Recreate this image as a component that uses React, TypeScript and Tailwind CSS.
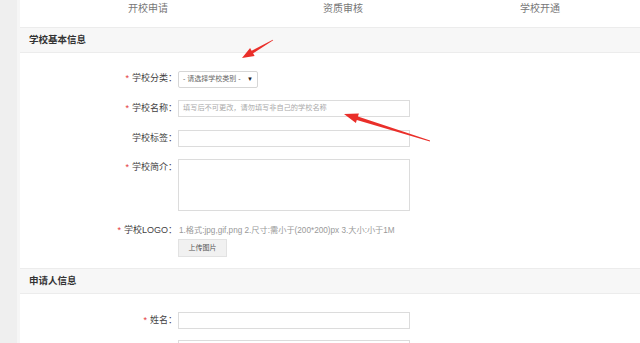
import React from 'react';

const font = { fontFamily: '"Liberation Sans", "Noto Sans CJK SC", sans-serif' };

// builds a tapered arrow polygon from tail to tip
const arrowPoints = (tx: number, ty: number, px: number, py: number, head: number, hw: number, sw: number) => {
  const dx = tx - px;
  const dy = ty - py;
  const len = Math.hypot(dx, dy);
  const ux = dx / len;
  const uy = dy / len;
  const nx = -uy;
  const ny = ux;
  const bx = px + ux * head;
  const by = py + uy * head;
  const pts = [
    [px, py],
    [bx + nx * hw, by + ny * hw],
    [bx + nx * sw * 0.5, by + ny * sw * 0.5],
    [tx + nx * 0.4, ty + ny * 0.4],
    [tx - nx * 0.4, ty - ny * 0.4],
    [bx - nx * sw * 0.5, by - ny * sw * 0.5],
    [bx - nx * hw, by - ny * hw],
  ];
  return pts.map(p => `${p[0].toFixed(1)},${p[1].toFixed(1)}`).join(' ');
};

const Label = ({ text, required }: { text: string; required?: boolean }) => (
  <div className="w-[158px] shrink-0 flex justify-end items-center pr-[1px] text-[9px] text-[#3f3f3f] h-[17px]">
    {required && <span className="text-[#e4393c] text-[9px] mr-[3px]">*</span>}
    <span>{text}：</span>
  </div>
);

const SectionHeader = ({ title }: { title: string }) => (
  <div className="h-[26px] shrink-0 bg-[#f7f7f7] border-y border-[#ececec] flex items-center pl-[9px]">
    <span className="text-[9.5px] font-bold text-[#333]">{title}</span>
  </div>
);

export default function App() {
  return (
    <div className="relative w-[640px] h-[343px] overflow-hidden bg-white flex items-start" style={font}>
      <div className="w-[20px] h-[343px] shrink-0 bg-[#efefef] border-r-[3px] border-[#f6f6f6]" />
      <div className="flex-1 flex flex-col">
        {/* steps */}
        <div className="h-[27px] shrink-0 relative text-[10px] text-[#777]">
          <span className="absolute left-[108px] top-[1px]">开校申请</span>
          <span className="absolute left-[303px] top-[1px]">资质审核</span>
          <span className="absolute left-[500px] top-[1px]">学校开通</span>
        </div>

        <SectionHeader title="学校基本信息" />

        <div className="pt-[18px] flex flex-col">
          <div className="flex h-[16px] items-center">
            <Label text="学校分类" required />
            <div className="w-[80px] h-[17px] border border-[#d6d6d6] rounded-[2px] flex items-center pl-[4px] pr-[4px] text-[7px] text-[#666]">
              <span className="flex-1">- 请选择学校类别 -</span>
              <span className="text-[6px] text-[#222]">▼</span>
            </div>
          </div>

          <div className="flex mt-[13px]">
            <Label text="学校名称" required />
            <div className="w-[232px] h-[17px] border border-[#dcdcdc] flex items-center pl-[4px] text-[7.2px] text-[#aaa]">
              填写后不可更改，请勿填写非自己的学校名称
            </div>
          </div>

          <div className="flex mt-[13px]">
            <Label text="学校标签" />
            <div className="w-[232px] h-[17px] border border-[#dcdcdc]" />
          </div>

          <div className="flex mt-[12px]">
            <Label text="学校简介" required />
            <div className="w-[232px] h-[52px] border border-[#dcdcdc]" />
          </div>

          <div className="flex mt-[13px] h-[14px] items-center">
            <Label text="学校LOGO" required />
            <span className="text-[8.2px] text-[#999] ml-[1px]">1.格式:jpg,gif,png 2.尺寸:需小于(200*200)px 3.大小:小于1M</span>
          </div>
          <div className="ml-[158px] mt-[1px]">
            <div className="w-[49px] h-[18px] bg-[#f1f1f1] border border-[#e2e2e2] flex items-center justify-center text-[7px] text-[#555]">
              上传图片
            </div>
          </div>
        </div>

        <div className="mt-[11px]">
          <SectionHeader title="申请人信息" />
        </div>

        <div className="pt-[18px] flex flex-col">
          <div className="flex">
            <Label text="姓名" required />
            <div className="w-[232px] h-[17px] border border-[#dcdcdc]" />
          </div>
          <div className="flex mt-[11px]">
            <div className="w-[158px]" />
            <div className="w-[232px] h-[17px] border border-[#dcdcdc]" />
          </div>
        </div>
      </div>

      {/* annotation arrows */}
      <svg className="absolute inset-0 pointer-events-none" width="640" height="343">
        <polygon points={arrowPoints(273, 40, 242, 58, 12, 4.5, 3)} fill="#ea2f2a" />
        <polygon points={arrowPoints(430, 141, 344, 114, 14, 5, 3.5)} fill="#ea2f2a" />
      </svg>
    </div>
  );
}
